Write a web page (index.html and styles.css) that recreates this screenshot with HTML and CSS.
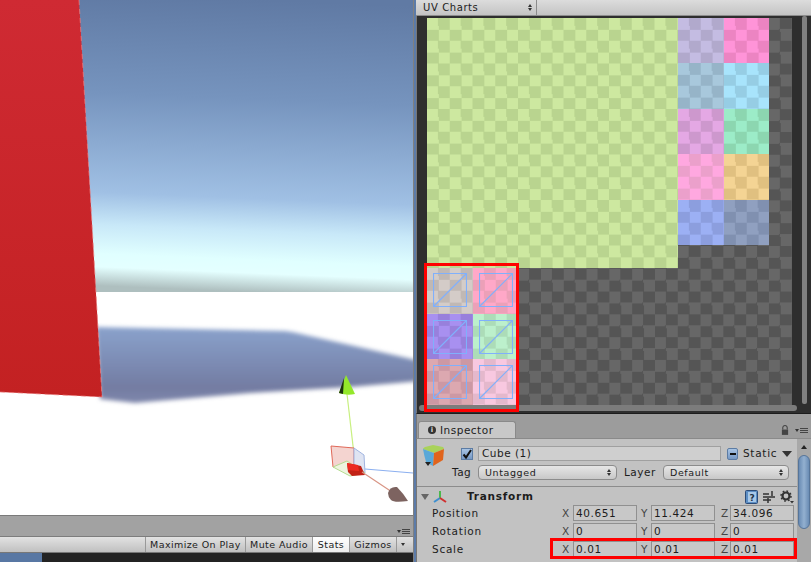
FILE: index.html
```html
<!DOCTYPE html>
<html lang="en">
<head>
<meta charset="utf-8">
<title>UV Charts</title>
<link rel="stylesheet" href="styles.css">
</head>
<body>
<div class="app">
  <section class="left">
    <svg class="scene" width="413" height="515" viewBox="0 0 413 515">
      <defs>
        <linearGradient id="sky" gradientUnits="userSpaceOnUse" x1="262" y1="0" x2="250" y2="292">
          <stop offset="0" stop-color="#607aa4"/>
          <stop offset=".34" stop-color="#7694be"/>
          <stop offset=".68" stop-color="#a0c0e4"/>
          <stop offset=".79" stop-color="#c8e8f8"/>
          <stop offset=".89" stop-color="#e0ffff"/>
          <stop offset=".935" stop-color="#e4ffff"/>
          <stop offset="1" stop-color="#aebfbf"/>
        </linearGradient>
        <linearGradient id="shade" x1="0" y1="0" x2="0" y2="1">
          <stop offset="0" stop-color="#8aa2cc"/>
          <stop offset=".8" stop-color="#737ca2"/>
          <stop offset="1" stop-color="#8088ac"/>
        </linearGradient>
        <linearGradient id="wall" x1="0" y1="0" x2="0" y2="1">
          <stop offset="0" stop-color="#cf2a33"/>
          <stop offset="1" stop-color="#c32122"/>
        </linearGradient>
        <filter id="soft"><feGaussianBlur stdDeviation="2.2"/></filter>
        <filter id="aa"><feGaussianBlur stdDeviation=".4"/></filter>
      </defs>
      <rect width="413" height="515" fill="#fff"/>
      <rect width="413" height="292" fill="url(#sky)"/>
      <path d="M96 327 L285 331 C295 332 300 334 310 336 L350 345 L420 361 L420 381 L350 387 L250 393 L135 403 L100 399 Z" fill="url(#shade)" filter="url(#soft)"/>
      <path d="M0 0 L79 0 L102 397 L0 392 Z" fill="url(#wall)"/>
      <path d="M79 0 L102 397 L0 392" fill="none" stroke="#f08080" stroke-width=".7" stroke-dasharray="5 4"/>
      <g filter="url(#aa)">
        <path d="M347 394 L355 463" stroke="#c8f080" stroke-width="1.2" fill="none"/>
        <path d="M339 393 L346 375 L355 394 Q347 396 339 393 Z" fill="#94e82c"/>
        <path d="M339 393 L344 378 L343 394 Z" fill="#1c3008"/>
        <path d="M331 446 L354 448 L354 467 L333 467 Z" fill="#f4d4d0" stroke="#e06858" stroke-width="1"/>
        <path d="M354 448 L364 455 L365 473 L354 467 Z" fill="#dfe4f2" stroke="#a0b4e0" stroke-width="1"/>
        <path d="M333 467 L347 461 L365 473 L350 476 Z" fill="#eef4e0" stroke="#b4dc90" stroke-width="1"/>
        <path d="M347 463 L361 466 L365 475 L352 476 L348 472 Z" fill="#c22418"/>
        <path d="M347 463 L358 465 L359 471 L348 470 Z" fill="#ec2c20"/>
        <path d="M365 469 L413 473" stroke="#8cb0f0" stroke-width="1.2" fill="none"/>
        <path d="M362 472 L392 492" stroke="#d89484" stroke-width="1.2" fill="none"/>
        <path d="M388 493 Q390 486 397 487 Q403 493 408 501 Q394 503 391 500 Q388 497 388 493 Z" fill="#7d6460"/>
      </g>
    </svg>
    <div class="strip">
      <span class="menu-mark"><i class="tick"></i><i class="lines"></i></span>
    </div>
    <div class="game-bar">
      <span class="g-btn g-max">Maximize On Play</span>
      <span class="g-btn g-mute">Mute Audio</span>
      <span class="g-btn g-stats">Stats</span>
      <span class="g-btn g-giz">Gizmos</span>
      <span class="g-btn g-arrow"><i class="tick"></i></span>
    </div>
    <div class="game-view"><div class="game-blue"></div></div>
  </section>

  <section class="right">
    <div class="uv-bar">
      <div class="uv-select"><span>UV Charts</span><span class="updown"><i></i><i></i></span></div>
    </div>
    <div class="uv-panel">
      <div class="atlas">
        <div class="c green"></div>
        <div class="c lav"></div><div class="c pink"></div>
        <div class="c bgray"></div><div class="c sky"></div>
        <div class="c orchid"></div><div class="c mint"></div>
        <div class="c rose"></div><div class="c orange"></div>
        <div class="c peri"></div><div class="c slate"></div>

        <div class="c b1 w"><svg viewBox="0 0 34 34"><path d="M.5.5h33v33H.5zM.5 33.500l33-33"/></svg></div>
        <div class="c b2 w"><svg viewBox="0 0 34 34"><path d="M.5.5h33v33H.5zM.5 33.500l33-33"/></svg></div>
        <div class="c b3 w mid"><svg viewBox="0 0 34 34"><path d="M.5.5h33v33H.5zM.5 33.500l33-33"/></svg></div>
        <div class="c b4 w mid"><svg viewBox="0 0 34 34"><path d="M.5.5h33v33H.5zM.5 33.500l33-33"/></svg></div>
        <div class="c b5 w low"><svg viewBox="0 0 34 34"><path d="M.5.5h33v33H.5zM.5 33.500l33-33"/></svg></div>
        <div class="c b6 w low"><svg viewBox="0 0 34 34"><path d="M.5.5h33v33H.5zM.5 33.500l33-33"/></svg></div>
      </div>
      <div class="vscroll"><i></i></div>
      <div class="hscroll"><i></i></div>
      <div class="mark mark-uv"></div>
    </div>

    <div class="tabs">
      <div class="tab"><span class="info">i</span>Inspector</div>
      <div class="tab-tools">
        <svg class="lock" width="8" height="10" viewBox="0 0 9 11"><path d="M2 5V3a2.500 2.500 0 0 1 5 0v2" fill="none" stroke="#444" stroke-width="1.2"/><rect x="1" y="5" width="7" height="6" fill="#444"/></svg>
        <span class="menu-mark"><i class="tick"></i><i class="lines"></i></span>
      </div>
    </div>
    <div class="inspector">
      <div class="insp-main">
        <div class="obj">
          <svg class="cube" width="24" height="24" viewBox="0 0 24 24">
            <path d="M0 4 Q0 3 2 2 L10 0 L20 2 Q21 3 21 4 L11 8 Z" fill="#a9d25a"/>
            <path d="M0 4 L11 8 L10 21 L3 17 Q1 10 0 4 Z" fill="#5aa8d8"/>
            <path d="M11 8 L21 4 L20 15 L10 21 Z" fill="#e0641c"/>
            <path d="M2 17 L8 17 L5 21 Z" fill="#222"/>
          </svg>
          <div class="obj-fields">
            <div class="row-a">
              <span class="check"><svg width="12" height="12" viewBox="0 0 12 12"><path d="M2.500 6.500 L5 9.500 L10 2" fill="none" stroke="#111" stroke-width="2"/></svg></span>
              <span class="name">Cube (1)</span>
              <span class="static-box"><i></i></span>
              <span class="static">Static</span>
              <i class="down"></i>
            </div>
            <div class="row-b">
              <span class="lab tag">Tag</span>
              <span class="pop pop-tag">Untagged<span class="updown"><i></i><i></i></span></span>
              <span class="lab layer">Layer</span>
              <span class="pop pop-layer">Default<span class="updown"><i></i><i></i></span></span>
            </div>
          </div>
        </div>
        <div class="comp-head">
          <i class="fold"></i>
          <svg class="axes" width="16" height="14" viewBox="0 0 16 14"><path d="M8 1V8" stroke="#4cb84c" stroke-width="2"/><path d="M8 8L2 12" stroke="#3d8fd0" stroke-width="2"/><path d="M8 8L14 12" stroke="#d03030" stroke-width="2"/></svg>
          <b>Transform</b>
          <span class="tools">
            <svg width="13" height="14" viewBox="0 0 13 14"><rect x=".5" y=".5" width="12" height="13" rx="1" fill="#5c8ec4" stroke="#2c4c78"/><rect x="3" y="2" width="8" height="10" fill="#a8c8e8"/><text x="4.500" y="10.500" class="q">?</text></svg>
            <svg width="12" height="12" viewBox="0 0 12 12"><path d="M0 3h6M0 6h12M0 9h8M9 0v5M5 7v5" stroke="#333" stroke-width="1.500"/></svg>
            <svg width="14" height="14" viewBox="0 0 14 14"><circle cx="6" cy="6" r="3.500" fill="none" stroke="#333" stroke-width="2.200"/><circle cx="6" cy="6" r="5" fill="none" stroke="#333" stroke-width="1.500" stroke-dasharray="1.700 2.200"/><path d="M10 11h4l-2 2.500z" fill="#333"/></svg>
          </span>
        </div>
        <div class="xform">
          <span class="xl">Position</span>
          <span class="ax ax-x">X</span><span class="f">40.651</span>
          <span class="ax">Y</span><span class="f">11.424</span>
          <span class="ax ax-z">Z</span><span class="f">34.096</span>
        </div>
        <div class="xform">
          <span class="xl">Rotation</span>
          <span class="ax ax-x">X</span><span class="f">0</span>
          <span class="ax">Y</span><span class="f">0</span>
          <span class="ax ax-z">Z</span><span class="f">0</span>
        </div>
        <div class="xform">
          <span class="xl">Scale</span>
          <span class="ax ax-x">X</span><span class="f">0.01</span>
          <span class="ax">Y</span><span class="f">0.01</span>
          <span class="ax ax-z">Z</span><span class="f">0.01</span>
        </div>
      </div>
      <div class="insp-scroll">
        <i class="up"></i>
        <i class="thumb"></i>
      </div>
      <div class="mark mark-scale"></div>
    </div>
  </section>
</div>
</body>
</html>
```

FILE: styles.css
```css
* { box-sizing: border-box; }
html, body { margin: 0; padding: 0; }
body {
  width: 811px;
  height: 562px;
  overflow: hidden;
  font: 10px/1 "DejaVu Sans", sans-serif;
  letter-spacing: .25px;
  color: #1c1c1c;
  background: #8a8a8a;
}
i { display: block; font-style: normal; }
.app { display: flex; width: 811px; height: 562px; }

/* left column */
.left { width: 414px; display: flex; flex-direction: column; flex: none; border-right: 1px solid #808080; }
.scene { display: block; flex: none; }
.strip { height: 21px; flex: none; background: #a2a2a2; border-top: 1px solid #7a7a7a; display: flex; justify-content: flex-end; align-items: flex-end; padding: 0 3px 2px 0; }
.menu-mark { display: flex; align-items: center; gap: 1px; }
.menu-mark .tick, .g-arrow .tick { width: 0; height: 0; border: 2px solid transparent; border-top: 3px solid #333; border-bottom: 0; }
.menu-mark .lines { width: 8px; height: 5px; border-top: 1px solid #444; border-bottom: 1px solid #444; background: linear-gradient(#444, #444) 0 1px / 8px 1px no-repeat; }
.game-bar { height: 17px; flex: none; display: flex; justify-content: flex-end; padding-right: 5px; background: linear-gradient(#e2e2e2, #c0c0c0); border-top: 1px solid #7d7d7d; border-bottom: 1px solid #777; }
.g-btn { display: flex; align-items: center; justify-content: center; border-left: 1px solid #999; font-size: 9.5px; letter-spacing: .4px; }
.g-max { width: 100px; }
.g-mute { width: 67px; }
.g-stats { width: 37px; background: linear-gradient(#fff, #ececec); }
.g-giz { width: 47px; }
.g-arrow { width: 12px; }
.game-view { flex: 1; background: #232323; }
.game-blue { width: 42px; height: 100%; background: #5877a3; }

/* right column */
.right { flex: 1; min-width: 0; display: flex; flex-direction: column; border-left: 2px solid #5c7ba8; }
.uv-bar { height: 16px; flex: none; background: linear-gradient(#dcdcdc, #c4c4c4); border-bottom: 1px solid #8c8c8c; padding-left: 1px; }
.uv-select { width: 120px; height: 15px; display: flex; justify-content: space-between; align-items: center; padding: 0 4px 0 6px; border-right: 1px solid #8c8c8c; font-size: 10px; letter-spacing: .6px; }
.updown { display: flex; flex-direction: column; gap: 1px; }
.updown i { width: 0; height: 0; border: 2px solid transparent; }
.updown i:first-child { border-top: 0; border-bottom: 3px solid #333; }
.updown i:last-child { border-bottom: 0; border-top: 3px solid #333; }

.uv-panel { position: relative; height: 398px; flex: none; background: #2e2e2e; border-left: 1px solid #777; border-bottom: 1px solid #1c1c1c; padding: 2px 0 0 10px; }
.atlas {
  width: 365px;
  height: 387px;
  display: grid;
  grid-template-columns: 45.5px 45.5px 160px 45.500px 45.500px 23px;
  grid-template-rows: repeat(5, 45.4px) 23px repeat(3, 45.600px);
  background: repeating-conic-gradient(#555 0 25%, #676767 0 50%) 0 0 / 22.8px 22.8px;
}
.c { --d: #555; --l: #666; background: repeating-conic-gradient(var(--d) 0 25%, var(--l) 0 50%) 0 0 / 22.75px 22.75px; }
.green { grid-column: 1 / 4; grid-row: 1 / 7; --l: #cde8a0; --d: #b9d48f; }
.lav { grid-column: 4; grid-row: 1; --l: #c4bce2; --d: #b1a9cc; }
.pink { grid-column: 5; grid-row: 1; --l: #ff94d8; --d: #ec84c2; }
.bgray { grid-column: 4; grid-row: 2; --l: #a8c8dc; --d: #96b4c8; }
.sky { grid-column: 5; grid-row: 2; --l: #a8e4fc; --d: #96cde4; }
.orchid { grid-column: 4; grid-row: 3; --l: #e4a8e4; --d: #cd98cd; }
.mint { grid-column: 5; grid-row: 3; --l: #9cecc8; --d: #8cd6b0; }
.rose { grid-column: 4; grid-row: 4; --l: #ffa8e0; --d: #eba0cb; }
.orange { grid-column: 5; grid-row: 4; --l: #f4d494; --d: #e0c080; }
.peri { grid-column: 4; grid-row: 5; --l: #9cb0f4; --d: #8c9ede; }
.slate { grid-column: 5; grid-row: 5; --l: #90a0c0; --d: #8090b0; }
.w { padding: 5px 6px; }
.w.mid { padding-top: 6px; }
.w.low { padding-top: 6px; }
.w svg { display: block; width: 34px; height: 34px; fill: none; stroke: #80b0fc; stroke-width: 1.15; }
.b1 { grid-column: 1; grid-row: 7; --l: #d4ccc8; --d: #c0b8b4; }
.b2 { grid-column: 2; grid-row: 7; --l: #ffa8c8; --d: #eca0b8; }
.b3 { grid-column: 1; grid-row: 8; --l: #a890f0; --d: #9880dc; }
.b4 { grid-column: 2; grid-row: 8; --l: #bcf0cc; --d: #acdcb8; }
.b5 { grid-column: 1; grid-row: 9; --l: #dca8b0; --d: #cc98a4; }
.b6 { grid-column: 2; grid-row: 9; --l: #f8c8e0; --d: #e4b8cc; }

.vscroll { position: absolute; right: 4px; top: 0; bottom: 9px; width: 5px; }
.vscroll i { width: 5px; height: 100%; background: #808080; border-radius: 2px; }
.hscroll { position: absolute; left: 2px; right: 14px; bottom: 2px; height: 6px; }
.hscroll i { height: 100%; background: #7c7c7c; border-radius: 3px; }
.mark { position: absolute; border: 3px solid #f00; pointer-events: none; }
.mark-uv { left: 7px; top: 247px; width: 95px; height: 149px; }

/* inspector */
.tabs { height: 24px; flex: none; display: flex; justify-content: space-between; align-items: flex-end; background: #9c9c9c; border-left: 1px solid #777; padding: 0 3px 0 0; }
.tab { width: 98px; height: 17px; margin-left: 1px; display: flex; align-items: center; gap: 4px; padding-left: 9px; background: #c8c8c8; border: 1px solid #8a8a8a; border-bottom: 0; border-radius: 3px 3px 0 0; font-size: 10.5px; letter-spacing: .5px; }
.info { width: 8px; height: 8px; border-radius: 50%; background: #333; color: #ddd; font-size: 7px; font-weight: bold; display: flex; align-items: center; justify-content: center; letter-spacing: 0; }
.tab-tools { display: flex; align-items: center; gap: 6px; padding-bottom: 3px; }

.inspector { position: relative; flex: 1; display: flex; background: #c2c2c2; border-left: 1px solid #777; border-top: 1px solid #8a8a8a; }
.insp-main { flex: 1; min-width: 0; }
.insp-scroll { position: relative; width: 14px; flex: none; background: #a8a8a8; display: flex; flex-direction: column; align-items: center; gap: 6px; padding-top: 6px; }
.insp-scroll .up { width: 0; height: 0; border: 3px solid transparent; border-top: 0; border-bottom: 4px solid #222; }
.insp-scroll .thumb { width: 12px; height: 74px; border-radius: 6px; background: linear-gradient(90deg, #6a8cb4, #93b0d0 50%, #6a8cb4); border: 1px solid #56759a; }

.obj { height: 48px; display: flex; border-bottom: 1px solid #8c8c8c; padding: 6px 0 0 6px; }
.cube { flex: none; margin-right: 14px; }
.obj-fields { flex: 1; padding-top: 1px; }
.row-a { display: flex; align-items: center; height: 15px; }
.check { width: 12px; height: 12px; background: linear-gradient(#a8c4e4, #7698c4); border: 1px solid #5c7ca4; flex: none; display: flex; align-items: center; justify-content: center; margin-right: 5px; }
.check svg { flex: none; }
.name { width: 243px; height: 15px; flex: none; background: #cfcfcf; border: 1px solid #a0a0a0; display: flex; align-items: center; padding-left: 3px; font-size: 10.5px; letter-spacing: .5px; margin-right: 6px; }
.static-box { width: 11px; height: 12px; flex: none; background: linear-gradient(#a8c4e4, #7698c4); border: 1px solid #5c7ca4; border-radius: 2px; display: flex; align-items: center; justify-content: center; margin-right: 5px; }
.static-box i { width: 6px; height: 2px; background: #111; }
.static { font-size: 10.5px; letter-spacing: .7px; margin-right: 5px; }
.down { width: 0; height: 0; border: 5px solid transparent; border-bottom: 0; border-top: 6px solid #333; }
.row-b { display: flex; align-items: center; height: 15px; margin-top: 4px; }
.lab { font-size: 10.5px; letter-spacing: .5px; }
.tag { margin-left: -9px; width: 20px; flex: none; }
.pop { height: 15px; flex: none; display: flex; justify-content: space-between; align-items: center; padding: 0 5px 0 6px; background: linear-gradient(#e6e6e6, #c8c8c8); border: 1px solid #8c8c8c; border-radius: 4px; font-size: 9.5px; letter-spacing: .6px; }
.pop-tag { width: 139px; margin-left: 6px; }
.layer { width: 31px; margin: 0 8px 0 7px; flex: none; }
.pop-layer { width: 126px; }

.comp-head { height: 17px; padding-top: 2px; display: flex; align-items: center; padding-left: 4px; }
.fold { width: 0; height: 0; border: 4px solid transparent; border-bottom: 0; border-top: 6px solid #666; margin-right: 3px; }
.axes { flex: none; margin-right: 19px; }
.comp-head b { font-size: 10.5px; letter-spacing: .75px; }
.tools { margin-left: auto; margin-right: 3px; display: flex; align-items: center; gap: 5px; }
.q { font: bold 9px "DejaVu Sans", sans-serif; fill: #234; }

.xform { display: flex; align-items: center; height: 18px; padding-left: 15px; font-size: 10.5px; }
.xl { width: 130px; flex: none; letter-spacing: .75px; }
.ax { width: 14px; flex: none; color: #444; text-align: left; padding-left: 4px; font-size: 10.5px; letter-spacing: 0; }
.ax-x { padding-left: 0; width: 11px; }
.ax-z { padding-left: 6px; width: 15px; }
.f { width: 64px; height: 16px; flex: none; background: #c8c8c8; border: 1px solid #909090; display: flex; align-items: center; padding-left: 2px; font-size: 10.5px; letter-spacing: .6px; }
.mark-scale { left: 133px; top: 99px; width: 247px; height: 21px; }
```
